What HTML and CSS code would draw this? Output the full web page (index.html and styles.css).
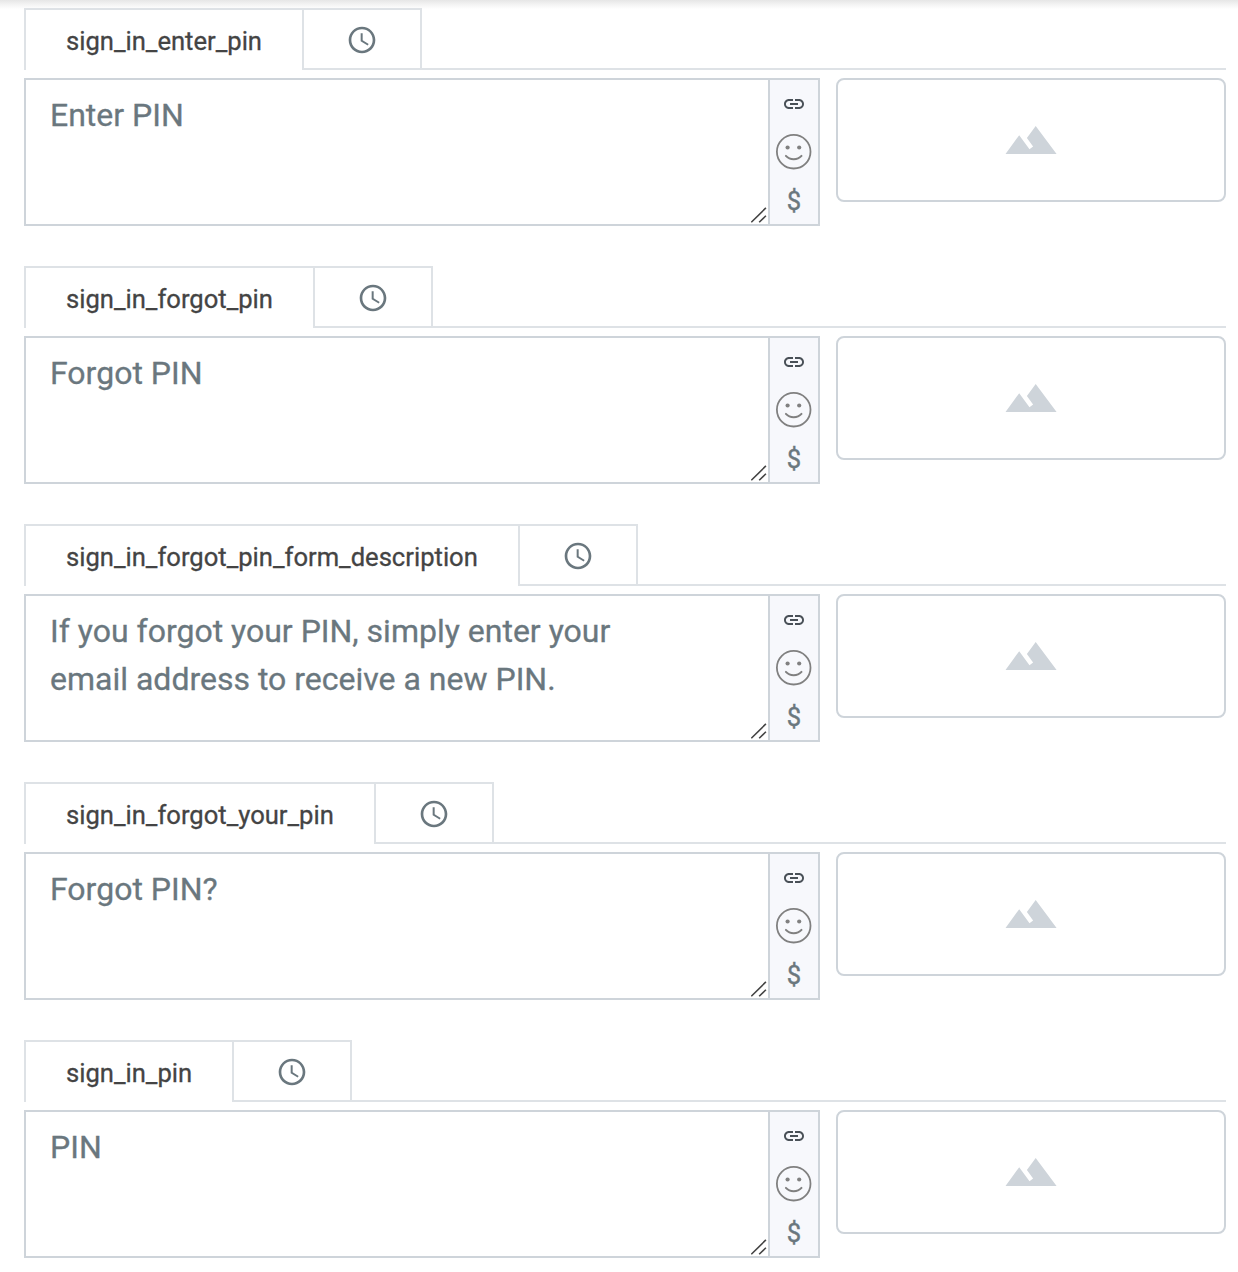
FILE: index.html
```html
<!DOCTYPE html>
<html lang="en">
<head>
<meta charset="utf-8">
<title>Content editor</title>
<link rel="stylesheet" href="styles.css">
</head>
<body>
<svg class="sprite" aria-hidden="true">
  <symbol id="clock" viewBox="0 0 24 24"><path d="M11.99 2C6.47 2 2 6.48 2 12s4.47 10 9.99 10C17.52 22 22 17.52 22 12S17.52 2 11.99 2zM12 20c-4.42 0-8-3.58-8-8s3.58-8 8-8 8 3.58 8 8-3.58 8-8 8zm.5-13H11v6l5.25 3.15.75-1.23-4.5-2.67z"/></symbol>
  <symbol id="link" viewBox="0 0 24 24"><path d="M3.9 12c0-1.71 1.39-3.1 3.1-3.1h4V7H7c-2.76 0-5 2.24-5 5s2.24 5 5 5h4v-1.9H7c-1.71 0-3.1-1.39-3.1-3.1zM8 13h8v-2H8v2zm9-6h-4v1.9h4c1.71 0 3.1 1.39 3.1 3.1s-1.39 3.1-3.1 3.1h-4V17h4c2.76 0 5-2.24 5-5s-2.24-5-5-5z"/></symbol>
  <symbol id="smile" viewBox="0 0 36 36"><circle cx="17.7" cy="17.7" r="16.8" fill="none" stroke="currentColor" stroke-width="1.8"/><circle cx="11.6" cy="13.5" r="2.1"/><circle cx="23.2" cy="13.5" r="2.1"/><path d="M9.9 21.9c4 4.5 11.6 4.5 15.6 0" fill="none" stroke="currentColor" stroke-width="2" stroke-linecap="round"/></symbol>
  <symbol id="terrain" viewBox="0 0 52 28"><path d="M.5 28 14.2 9.2l10.3 14.1 3.6-2.7L21.9 12 30.7 0 51.6 28z"/></symbol>
  <symbol id="grip" viewBox="0 0 16 16"><path d="M.3 15.3 14.9.9M8.2 15.3 14.9 8.7" fill="none" stroke="currentColor" stroke-width="1.6"/></symbol>
</svg>
<main class="entries">
  <section class="entry">
    <div class="tabs"><div class="tab tab-name">sign_in_enter_pin</div><div class="tab tab-history"><svg class="icon-clock"><use href="#clock"/></svg></div><div class="tabs-rest"></div></div>
    <div class="editor">
      <div class="field"><div class="text">Enter PIN<svg class="grip"><use href="#grip"/></svg></div>
        <div class="tools"><svg class="icon-link"><use href="#link"/></svg><svg class="icon-smile"><use href="#smile"/></svg><span class="dollar">$</span></div></div>
      <div class="media"><svg class="icon-terrain"><use href="#terrain"/></svg></div>
    </div>
  </section>
  <section class="entry">
    <div class="tabs"><div class="tab tab-name">sign_in_forgot_pin</div><div class="tab tab-history"><svg class="icon-clock"><use href="#clock"/></svg></div><div class="tabs-rest"></div></div>
    <div class="editor">
      <div class="field"><div class="text">Forgot PIN<svg class="grip"><use href="#grip"/></svg></div>
        <div class="tools"><svg class="icon-link"><use href="#link"/></svg><svg class="icon-smile"><use href="#smile"/></svg><span class="dollar">$</span></div></div>
      <div class="media"><svg class="icon-terrain"><use href="#terrain"/></svg></div>
    </div>
  </section>
  <section class="entry">
    <div class="tabs"><div class="tab tab-name">sign_in_forgot_pin_form_description</div><div class="tab tab-history"><svg class="icon-clock"><use href="#clock"/></svg></div><div class="tabs-rest"></div></div>
    <div class="editor">
      <div class="field"><div class="text">If you forgot your PIN, simply enter your<br>email address to receive a new PIN.<svg class="grip"><use href="#grip"/></svg></div>
        <div class="tools"><svg class="icon-link"><use href="#link"/></svg><svg class="icon-smile"><use href="#smile"/></svg><span class="dollar">$</span></div></div>
      <div class="media"><svg class="icon-terrain"><use href="#terrain"/></svg></div>
    </div>
  </section>
  <section class="entry">
    <div class="tabs"><div class="tab tab-name">sign_in_forgot_your_pin</div><div class="tab tab-history"><svg class="icon-clock"><use href="#clock"/></svg></div><div class="tabs-rest"></div></div>
    <div class="editor">
      <div class="field"><div class="text">Forgot PIN?<svg class="grip"><use href="#grip"/></svg></div>
        <div class="tools"><svg class="icon-link"><use href="#link"/></svg><svg class="icon-smile"><use href="#smile"/></svg><span class="dollar">$</span></div></div>
      <div class="media"><svg class="icon-terrain"><use href="#terrain"/></svg></div>
    </div>
  </section>
  <section class="entry">
    <div class="tabs"><div class="tab tab-name">sign_in_pin</div><div class="tab tab-history"><svg class="icon-clock"><use href="#clock"/></svg></div><div class="tabs-rest"></div></div>
    <div class="editor">
      <div class="field"><div class="text">PIN<svg class="grip"><use href="#grip"/></svg></div>
        <div class="tools"><svg class="icon-link"><use href="#link"/></svg><svg class="icon-smile"><use href="#smile"/></svg><span class="dollar">$</span></div></div>
      <div class="media"><svg class="icon-terrain"><use href="#terrain"/></svg></div>
    </div>
  </section>
</main>
</body>
</html>
```
FILE: styles.css
```css
* { box-sizing: border-box; }
body {
  margin: 0;
  background: #fff linear-gradient(#e6e6e6, #f2f2f2 4px, #fff 9px) no-repeat 0 0 / 100% 9px;
  font-family: Roboto, "Liberation Sans", sans-serif;
}
svg { display: block; fill: currentColor; }
.sprite { display: none; }
.entries {
  display: flex;
  flex-direction: column;
  gap: 40px;
  width: 1238px;
  padding: 8px 12px 14px 24px;
}
.entry { display: flex; flex-direction: column; gap: 8px; }
.tabs { display: flex; height: 62px; }
.tab { border-top: 2px solid #dee2e6; background: #fff; }
.tab-name {
  border-left: 2px solid #dee2e6;
  padding: 0 40px;
  font-size: 25.6px;
  line-height: 62px;
  color: #444;
  -webkit-text-stroke: 0.3px;
  white-space: nowrap;
}
.tab-history {
  display: flex;
  align-items: center;
  justify-content: center;
  width: 120px;
  flex: none;
  border: 2px solid #dee2e6;
  padding-top: 2px;
  color: #6a777e;
}
.tabs-rest { flex: 1; border-bottom: 2px solid #dee2e6; }
.icon-clock { width: 32px; height: 32px; }
.editor { display: flex; align-items: flex-start; gap: 16px; }
.field {
  display: flex;
  width: 796px;
  height: 148px;
  border: 2px solid #ced4da;
  background: #fff;
}
.text {
  position: relative;
  flex: 1;
  padding: 11px 24px;
  font-size: 32px;
  line-height: 48px;
  color: #6a777e;
  -webkit-text-stroke: 0.3px;
  white-space: nowrap;
}
.grip {
  position: absolute;
  right: 1px;
  bottom: 1px;
  width: 16px;
  height: 16px;
  color: #444;
}
.tools {
  display: flex;
  flex-direction: column;
  align-items: center;
  width: 50px;
  padding-top: 12px;
  border-left: 2px solid #ced4da;
  background: #f7f8fc;
}
.icon-link { width: 24px; height: 24px; color: #495057; }
.icon-smile { width: 36px; height: 36px; margin-top: 18px; color: #808080; }
.dollar { margin-top: 13px; font-size: 25.6px; line-height: 36px; color: #6a777e; -webkit-text-stroke: 0.4px; }
.media {
  display: flex;
  align-items: center;
  justify-content: center;
  width: 390px;
  height: 124px;
  border: 2px solid #ced4da;
  border-radius: 8px;
  background: #fff;
  color: #ced4da;
}
.icon-terrain { width: 52px; height: 28px; }
```
